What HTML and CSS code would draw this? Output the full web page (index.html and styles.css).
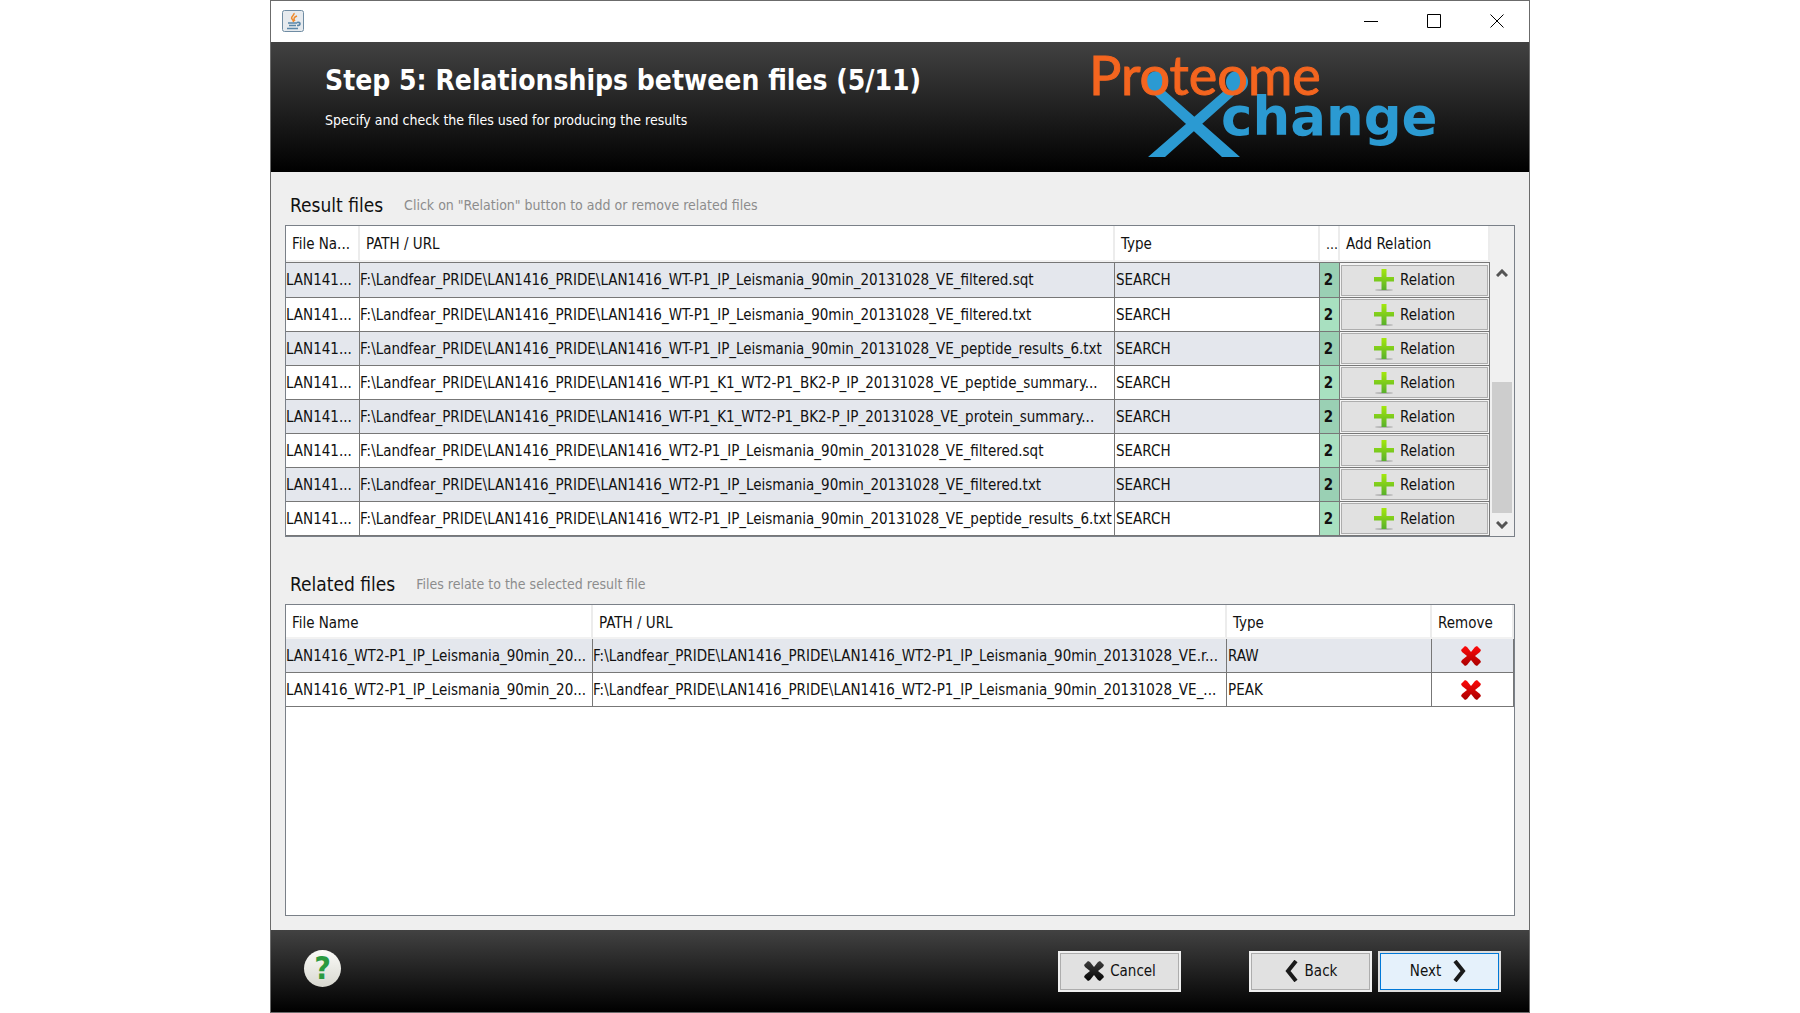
FILE: index.html
```html
<!DOCTYPE html>
<html lang="en">
<head>
<meta charset="utf-8">
<title>Step 5: Relationships between files</title>
<link rel="stylesheet" href="styles.css">
</head>
<body>
<svg class="defs" aria-hidden="true">
  <defs>
    <linearGradient id="green" x1="0" y1="0" x2="0" y2="1"><stop offset="0" stop-color="#a4e80c"/><stop offset="1" stop-color="#58b02c"/></linearGradient>
    <linearGradient id="red" x1="0" y1="0" x2="0" y2="1"><stop offset="0" stop-color="#ff0a0a"/><stop offset="1" stop-color="#a80000"/></linearGradient>
    <linearGradient id="dark" x1="0" y1="0" x2="0" y2="1"><stop offset="0" stop-color="#3c3c3c"/><stop offset="1" stop-color="#050505"/></linearGradient>
    <symbol id="plus" viewBox="0 0 20 22">
      <ellipse cx="10" cy="21" rx="9" ry="1" fill="#b4b4b4"/>
      <path d="M7.500 0h5v8H20v4.500h-7.500V21h-5v-8.500H0V8h7.500z" fill="url(#green)"/>
    </symbol>
    <symbol id="cross" viewBox="0 0 22 22">
      <path d="M1 5 5 1l2 1 4 5 4-5 2-1 4 4-1 2-5 4 5 4 1 2-4 4-2-1-4-5-4 5-2 1-4-4 1-2 5-4-5-4z"/>
    </symbol>
  </defs>
</svg>
<div class="window">
  <div class="titlebar">
    <svg class="app-icon" viewBox="0 0 22 22" aria-hidden="true">
      <rect x=".5" y=".5" width="21" height="21" rx="2" fill="#e6eaee" stroke="#6f8ca3"/>
      <path d="M12 3c1 2-4 4-2 6 1 1 2 2 1 3M15 6c-3 1-4 3-2 5" fill="none" stroke="#ef8a2c" stroke-width="1.500"/>
      <path d="M6 13h9M7 15.500h7M5 18.500h11M15 12.500c4-1 4 3 0 3" fill="none" stroke="#5a86a8" stroke-width="1.600"/>
    </svg>
    <div class="window-controls">
      <button type="button" aria-label="Minimize"><svg viewBox="0 0 14 14"><path d="M0 7.500h14"/></svg></button>
      <button type="button" aria-label="Maximize"><svg viewBox="0 0 14 14"><path d="M.5.5h13v13H.5z"/></svg></button>
      <button type="button" aria-label="Close"><svg viewBox="0 0 14 14"><path d="m.5.5 13 13m0-13-13 13"/></svg></button>
    </div>
  </div>

  <header class="banner">
    <div class="heading">
      <h1>Step 5: Relationships between files (5/11)</h1>
      <p>Specify and check the files used for producing the results</p>
    </div>
    <svg class="logo" viewBox="0 0 440 125" role="img" aria-label="ProteomeXchange">
      <g fill="#2b9ad2">
        <path d="M60 48h15l76 67h-18zM136 48h15L76 115H59z"/>
        <circle cx="68" cy="40" r="11"/><circle cx="148" cy="40" r="11"/>
        <text class="logo-change" x="132" y="93">change</text>
      </g>
      <text class="logo-proteome" x="0" y="53">Proteome</text>
    </svg>
  </header>

  <main>
    <div class="section-head"><h2>Result files</h2><p>Click on "Relation" button to add or remove related files</p></div>
    <div class="pane result-pane">
      <table class="result">
        <colgroup><col class="c-short"><col><col class="c-type"><col class="c-num"><col class="c-add"></colgroup>
        <thead><tr><th>File Na...</th><th>PATH / URL</th><th>Type</th><th>...</th><th>Add Relation</th></tr></thead>
        <tbody>
          <tr><td>LAN141...</td><td>F:\Landfear_PRIDE\LAN1416_PRIDE\LAN1416_WT-P1_IP_Leismania_90min_20131028_VE_filtered.sqt</td><td>SEARCH</td><td>2</td><td><button type="button"><svg><use href="#plus"/></svg>Relation</button></td></tr>
          <tr><td>LAN141...</td><td>F:\Landfear_PRIDE\LAN1416_PRIDE\LAN1416_WT-P1_IP_Leismania_90min_20131028_VE_filtered.txt</td><td>SEARCH</td><td>2</td><td><button type="button"><svg><use href="#plus"/></svg>Relation</button></td></tr>
          <tr><td>LAN141...</td><td>F:\Landfear_PRIDE\LAN1416_PRIDE\LAN1416_WT-P1_IP_Leismania_90min_20131028_VE_peptide_results_6.txt</td><td>SEARCH</td><td>2</td><td><button type="button"><svg><use href="#plus"/></svg>Relation</button></td></tr>
          <tr><td>LAN141...</td><td>F:\Landfear_PRIDE\LAN1416_PRIDE\LAN1416_WT-P1_K1_WT2-P1_BK2-P_IP_20131028_VE_peptide_summary...</td><td>SEARCH</td><td>2</td><td><button type="button"><svg><use href="#plus"/></svg>Relation</button></td></tr>
          <tr><td>LAN141...</td><td>F:\Landfear_PRIDE\LAN1416_PRIDE\LAN1416_WT-P1_K1_WT2-P1_BK2-P_IP_20131028_VE_protein_summary...</td><td>SEARCH</td><td>2</td><td><button type="button"><svg><use href="#plus"/></svg>Relation</button></td></tr>
          <tr><td>LAN141...</td><td>F:\Landfear_PRIDE\LAN1416_PRIDE\LAN1416_WT2-P1_IP_Leismania_90min_20131028_VE_filtered.sqt</td><td>SEARCH</td><td>2</td><td><button type="button"><svg><use href="#plus"/></svg>Relation</button></td></tr>
          <tr><td>LAN141...</td><td>F:\Landfear_PRIDE\LAN1416_PRIDE\LAN1416_WT2-P1_IP_Leismania_90min_20131028_VE_filtered.txt</td><td>SEARCH</td><td>2</td><td><button type="button"><svg><use href="#plus"/></svg>Relation</button></td></tr>
          <tr><td>LAN141...</td><td>F:\Landfear_PRIDE\LAN1416_PRIDE\LAN1416_WT2-P1_IP_Leismania_90min_20131028_VE_peptide_results_6.txt</td><td>SEARCH</td><td>2</td><td><button type="button"><svg><use href="#plus"/></svg>Relation</button></td></tr>
        </tbody>
      </table>
      <div class="scrollbar">
        <svg viewBox="0 0 12 8"><path d="m1 7 5-5 5 5"/></svg>
        <div class="track"><div class="thumb"></div></div>
        <svg viewBox="0 0 12 8"><path d="m1 1 5 5 5-5"/></svg>
      </div>
    </div>

    <div class="section-head"><h2>Related files</h2><p>Files relate to the selected result file</p></div>
    <div class="pane related-pane">
      <table class="related">
        <colgroup><col class="c-name"><col><col class="c-type"><col class="c-remove"></colgroup>
        <thead><tr><th>File Name</th><th>PATH / URL</th><th>Type</th><th>Remove</th></tr></thead>
        <tbody>
          <tr><td>LAN1416_WT2-P1_IP_Leismania_90min_20...</td><td>F:\Landfear_PRIDE\LAN1416_PRIDE\LAN1416_WT2-P1_IP_Leismania_90min_20131028_VE.r...</td><td>RAW</td><td><button type="button" aria-label="Remove"><svg fill="url(#red)"><use href="#cross"/></svg></button></td></tr>
          <tr><td>LAN1416_WT2-P1_IP_Leismania_90min_20...</td><td>F:\Landfear_PRIDE\LAN1416_PRIDE\LAN1416_WT2-P1_IP_Leismania_90min_20131028_VE_...</td><td>PEAK</td><td><button type="button" aria-label="Remove"><svg fill="url(#red)"><use href="#cross"/></svg></button></td></tr>
        </tbody>
      </table>
    </div>
  </main>

  <footer>
    <button type="button" class="help" aria-label="Help">?</button>
    <div class="actions">
      <button type="button" class="cancel"><svg viewBox="0 0 22 22" fill="url(#dark)"><use href="#cross"/></svg>Cancel</button>
      <button type="button"><svg class="chevron" viewBox="0 0 14 22"><path d="M12 1 4 11l8 10"/></svg>Back</button>
      <button type="button" class="next">Next<svg class="chevron" viewBox="0 0 14 22"><path d="m2 1 8 10-8 10"/></svg></button>
    </div>
  </footer>
</div>
</body>
</html>
```
FILE: styles.css
```css
* { box-sizing: border-box; }
body { margin: 0; background: #fff; color: #111; font: 15px/18px "DejaVu Sans Condensed", "DejaVu Sans", sans-serif; }
h1, h2, p { margin: 0; }
button { font: inherit; color: inherit; }
.defs { position: absolute; width: 0; height: 0; }

.window { width: 70%; min-height: 100vh; margin: 0 auto; border: 1px solid #6b6b6b; background: #efefef; display: flex; flex-direction: column; }
.titlebar { height: 41px; padding: 0 25px 2px 11px; background: #fff; display: flex; align-items: center; justify-content: space-between; }
.app-icon { width: 22px; height: 22px; }
.window-controls { display: flex; gap: 49px; }
.window-controls button { padding: 0; border: 0; background: none; width: 14px; height: 14px; }
.window-controls svg { display: block; width: 14px; height: 14px; fill: none; stroke: #000; }

.banner { height: 130px; padding-left: 54px; background: linear-gradient(#424242, #000); color: #fff; display: flex; justify-content: space-between; }
.heading { padding-top: 21px; }
.heading h1 { font-size: 28px; line-height: 36px; white-space: nowrap; }
.heading p { padding-top: 12px; font-size: 14px; }
.logo { width: 440px; height: 125px; }
.logo-proteome { font: 54px Lato, sans-serif; fill: #f4651f; stroke: #f4651f; stroke-width: 1; }
.logo-change { font: bold 53px "DejaVu Sans", sans-serif; }

main { flex: 1; padding: 0 14px 14px; display: flex; flex-direction: column; }
.section-head { height: 53px; padding: 13px 5px 0; display: flex; align-items: center; gap: 21px; }
.section-head h2 { font-size: 19px; font-weight: normal; line-height: 30px; }
.section-head p { color: #8c8c8c; font-size: 14px; }
.pane { border: 1px solid #7a8088; background: #fff; display: flex; }
.related-pane { flex: 1; align-items: flex-start; }
.pane + .section-head { height: 67px; padding-top: 27px; }

table { flex: 1; min-width: 0; table-layout: fixed; border-collapse: separate; border-spacing: 0; }
.c-short { width: 74px; }
.c-type { width: 205px; }
.c-num { width: 20px; }
.c-add { width: 150px; }
.c-name { width: 307px; }
.c-remove { width: 82px; }
th { height: 34px; padding: 3px 0 0 6px; font-weight: normal; text-align: left; border-right: 2px solid #ececec; border-bottom: 2px solid #f2f2f2; white-space: nowrap; }
.result th { height: 36px; padding-top: 1px; }
.result th:nth-child(4) { font-size: 14px; }
td { height: 34px; padding: 0; border-right: 1px solid #777; border-bottom: 1px solid #777; white-space: nowrap; overflow: hidden; }
td:nth-child(3) { padding-left: 1px; }
.result tbody tr:first-child td { height: 36px; border-top: 1px solid #777; }
tbody tr:nth-child(odd) { background: #e4e7ed; }
.result td:nth-child(4) { padding: 0 2px 0 0; font-weight: bold; text-align: center; background: #a8e0c0; }
.result tr:nth-child(odd) td:nth-child(4) { background: #9ad0b4; }
.result td:nth-child(5) { padding: 1px; background: #f4f4f4; }
.result td button { width: 100%; height: 31px; padding: 0; border: 1px solid #adadad; background: #e1e1e1; display: flex; align-items: center; justify-content: center; gap: 6px; }
.result td svg { width: 20px; height: 22px; }
.related td:last-child { padding: 0 3px 0 0; }
.related td button { width: 100%; height: 33px; padding: 0; border: 0; background: none; display: flex; align-items: center; justify-content: center; }
.related td svg { width: 22px; height: 22px; }

.scrollbar { width: 24px; padding: 43px 2px 7px; background: #f0f0f0; display: flex; flex-direction: column; align-items: center; gap: 8px; }
.scrollbar svg { width: 12px; height: 8px; fill: none; stroke: #555; stroke-width: 3; }
.track { flex: 1; width: 20px; display: flex; flex-direction: column; justify-content: flex-end; }
.thumb { height: 131px; background: #cdcdcd; }

footer { height: 82px; padding: 0 28px 0 33px; background: linear-gradient(#424242, #000); display: flex; align-items: center; justify-content: space-between; }
.help { width: 37px; height: 37px; margin-bottom: 6px; padding: 0; border: 0; border-radius: 50%; background: linear-gradient(#fbfbf8, #d8d8d0); color: #2a9a40; font-size: 32px; font-weight: bold; line-height: 36px; }
.actions { display: flex; gap: 6px; }
.actions button { width: 123px; height: 41px; padding: 0; border: 2px solid #f0f0f0; box-shadow: inset 0 0 0 1px #adadad; background: #e1e1e1; display: flex; align-items: center; justify-content: center; gap: 5px; }
.actions .cancel { margin-right: 62px; }
.actions svg { width: 22px; height: 22px; }
.actions .chevron { width: 14px; margin-right: 2px; fill: none; stroke: #1a1a1a; stroke-width: 4; }
.actions .next { border-color: #ddd; box-shadow: inset 0 0 0 1px #0078d7; background: #e5f1fb; gap: 12px; }
```
